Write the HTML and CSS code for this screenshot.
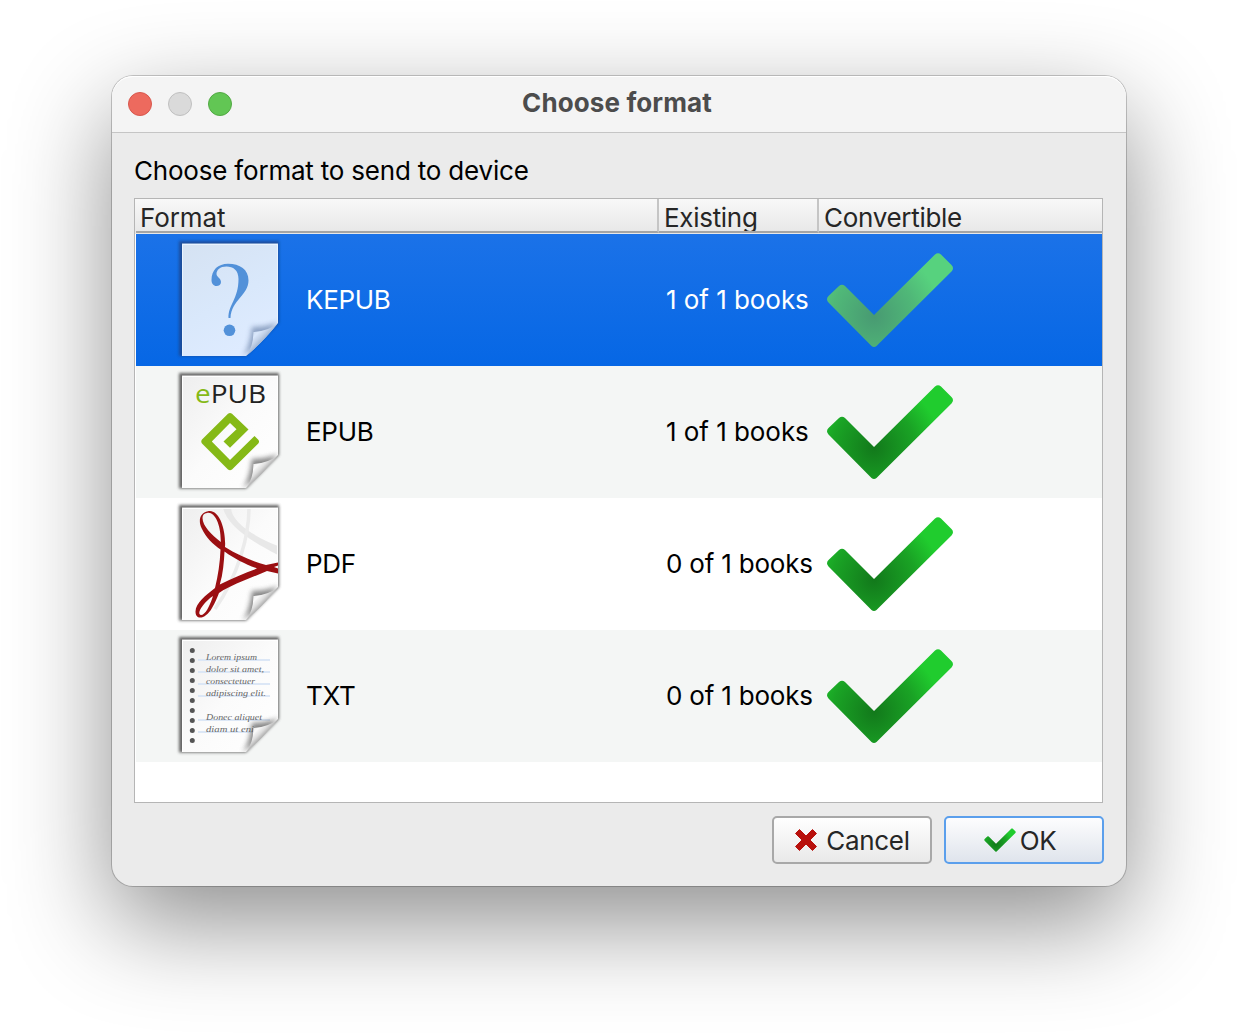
FILE: index.html
```html
<!DOCTYPE html>
<html lang="en">
<head>
<meta charset="utf-8">
<title>Choose format</title>
<link rel="stylesheet" href="styles.css">
</head>
<body>
<svg class="defs" aria-hidden="true">
  <defs>
    <radialGradient id="green" gradientUnits="userSpaceOnUse" cx="55" cy="82" r="76">
      <stop offset="0" stop-color="#12791b"/><stop offset=".55" stop-color="#1aa325"/><stop offset=".88" stop-color="#20cc2e"/>
    </radialGradient>
    <radialGradient id="green-selected" gradientUnits="userSpaceOnUse" cx="55" cy="82" r="76">
      <stop offset="0" stop-color="#489a72"/><stop offset=".55" stop-color="#50b878"/><stop offset=".88" stop-color="#57d27e"/>
    </radialGradient>
    <linearGradient id="paper" x1="0" y1="0" x2="1" y2="1">
      <stop offset="0" stop-color="#eeeeee"/><stop offset=".5" stop-color="#fbfbfb"/><stop offset="1" stop-color="#fff"/>
    </linearGradient>
    <linearGradient id="paper-selected" x1="0" y1="0" x2="0.5" y2="1">
      <stop offset="0" stop-color="#d5e2f2"/><stop offset=".6" stop-color="#d9e8fb"/><stop offset="1" stop-color="#deebff"/>
    </linearGradient>
    <linearGradient id="curl" gradientUnits="userSpaceOnUse" x1="82" y1="96" x2="93" y2="107">
      <stop offset="0" stop-color="#e6e6e6"/><stop offset=".4" stop-color="#fafafa"/><stop offset=".7" stop-color="#dedede"/><stop offset="1" stop-color="#a9a9a9"/>
    </linearGradient>
    <linearGradient id="curl-selected" gradientUnits="userSpaceOnUse" x1="82" y1="96" x2="93" y2="107">
      <stop offset="0" stop-color="#c9d8ee"/><stop offset=".4" stop-color="#d9e7fb"/><stop offset=".7" stop-color="#c3d2e8"/><stop offset="1" stop-color="#a0b4d0"/>
    </linearGradient>
    <filter id="soft" x="-20%" y="-20%" width="140%" height="140%"><feGaussianBlur stdDeviation="1.8"/></filter>
    <filter id="soft-fold" x="-50%" y="-50%" width="200%" height="200%"><feGaussianBlur stdDeviation="2.6"/></filter>
    <clipPath id="page-clip"><path d="M12 9.500H108V89Q92 109 76 122H12Z"/></clipPath>
    <path id="page" d="M12 9.500H108V89Q92 109 76 122H12Z"/>
    <path id="fold" d="M108 89Q92 109 76 122Q83 114 83.500 98Q99 97 108 89Z"/>
    <path id="fold-shade" d="M108 88Q97 93 82 93Q80 112 73 122L90 110Z"/>
    <path id="tick" d="M57.500 112Q55 114 52.500 112L9.500 68.500Q6.500 65.200 9.500 62L20 52Q23 49.500 26 52L55 81L116 20.500Q119 18 122 20.500L132.500 31Q135.500 34.200 132.500 37.500Z"/>
  </defs>
</svg>

<main class="window">
  <header class="titlebar">
    <div class="lights"><i class="light close"></i><i class="light idle"></i><i class="light grow"></i></div>
    <h1 class="title">Choose format</h1>
  </header>
  <section class="content">
    <p class="prompt">Choose format to send to device</p>
    <div class="table">
      <div class="row head">
        <div class="th"><span>Format</span></div>
        <div class="th"><span>Existing</span></div>
        <div class="th"><span>Convertible</span></div>
      </div>
      <div class="row item selected">
        <div class="format">
          <svg class="doc" viewBox="0 0 120 132">
            <path d="M9 7H109V89L76 122H9Z" fill="#1c3f80" opacity=".75" filter="url(#soft)"/>
            <use href="#page" fill="url(#paper-selected)"/>
            <path d="M12.500 122V10.500H107.500V89" fill="none" stroke="#e9f3ff"/>
            <path d="M58.500 84C58 71 68.500 65 68.500 45C68.500 36 63 32.500 56.500 32.500C50 32.500 46.500 36 46.500 40C46.500 43 51 44 51 48C51 50.500 49 52 46.500 52C43.500 52 41.500 49.500 41.500 46C41.500 36 48 29.800 58 29.800C70 29.800 78.500 35.500 78.500 46.500C78.500 61 61.500 66 60.500 84Z" fill="#5291d9"/>
            <circle cx="59.500" cy="96.300" r="5.800" fill="#5291d9"/>
            <g clip-path="url(#page-clip)"><use href="#fold-shade" fill="#58729b" opacity=".6" filter="url(#soft-fold)"/></g>
            <use href="#fold" fill="url(#curl-selected)"/>
          </svg><span class="name">KEPUB</span>
        </div>
        <div class="count"><span>1 of 1 books</span></div>
        <svg class="check" viewBox="0 0 140 132"><use href="#tick" fill="url(#green-selected)"/></svg>
      </div>
      <div class="row item alt">
        <div class="format">
          <svg class="doc" viewBox="0 0 120 132">
            <path d="M9 7H109V89L76 122.500H9Z" fill="#555" opacity=".9" filter="url(#soft)"/>
            <use href="#page" fill="url(#paper)"/>
            <path d="M12.500 122V10.500H107.500V89" fill="none" stroke="#fff"/>
            <text class="epub-word" x="25" y="37" textLength="71" lengthAdjust="spacingAndGlyphs"><tspan fill="#85b916">e</tspan>PUB</text>
            <path d="M53.500 75.500L60 81.800L78.500 63.600L62 47.800Q60 46.200 58 47.800L32 73.500Q30.500 75.500 32 77.500L58 103.500Q60 105 62 103.500L88.300 77.500Q89.800 75.500 88.300 73.700L84.500 70L60 94L41.800 75.500L60 57L66.500 63.200Z" fill="#85b916"/>
            <g clip-path="url(#page-clip)"><use href="#fold-shade" fill="#555" opacity=".7" filter="url(#soft-fold)"/></g>
            <use href="#fold" fill="url(#curl)"/>
          </svg><span class="name">EPUB</span>
        </div>
        <div class="count"><span>1 of 1 books</span></div>
        <svg class="check" viewBox="0 0 140 132"><use href="#tick" fill="url(#green)"/></svg>
      </div>
      <div class="row item">
        <div class="format">
          <svg class="doc" viewBox="0 0 120 132">
            <path d="M9 7H109V89L76 122.500H9Z" fill="#555" opacity=".9" filter="url(#soft)"/>
            <use href="#page" fill="url(#paper)"/>
            <g clip-path="url(#page-clip)">
              <path d="M53 10C57 27 80 43 108 57V48C85 39 62 25 61 10Z" fill="#e8e8e8"/>
              <path d="M79 10C79 38 68 78 45 111" fill="none" stroke="#ebebeb" stroke-width="3.500"/>
              <path fill-rule="evenodd" fill="#9b0f12" d="M38 13.200C30 15 28 22 31.500 30C36 40 43 46 50.500 51.500C50 65 48 78 45 90C36 97 25.500 105 25.500 113.500C25.500 123 36 121 42 110C45 105 47 100 49 95C63 86 81 80 97 73L108 75.500V70.500L104 69L108 67.500V64.500L96 67C81 63 68 57 55 49C56 37 52 18 43.500 14C41.500 13 40 13 38 13.200ZM37 15C44 13 51 25 50.800 44C42 37 32.500 28 32.500 20C32.500 17 34 15.500 37 15ZM54.500 53.500C65 61 75 66 87 70.500C75 75 63 79.500 49.800 86.500C53 76 54 64 54.500 53.500ZM43 98C39.500 109 35 117 31 117C26 116.500 32.500 105 43 98Z"/>
              <use href="#fold-shade" fill="#555" opacity=".7" filter="url(#soft-fold)"/>
            </g>
            <path d="M12.500 122V10.500H107.500V64" fill="none" stroke="#fff"/>
            <use href="#fold" fill="url(#curl)"/>
          </svg><span class="name">PDF</span>
        </div>
        <div class="count zero"><span>0 of 1 books</span></div>
        <svg class="check" viewBox="0 0 140 132"><use href="#tick" fill="url(#green)"/></svg>
      </div>
      <div class="row item alt">
        <div class="format">
          <svg class="doc" viewBox="0 0 120 132">
            <path d="M9 7H109V89L76 122.500H9Z" fill="#555" opacity=".9" filter="url(#soft)"/>
            <use href="#page" fill="url(#paper)"/>
            <path d="M12.500 122V10.500H107.500V89" fill="none" stroke="#fff"/>
            <path d="M28 30H100M28 42H100M28 54H100M28 66H100M28 90H100M28 102H84" stroke="#dce7f6" stroke-width="2"/>
            <path d="M22.300 20.500V111" stroke="#555" stroke-width="5" stroke-linecap="round" stroke-dasharray="0 10"/>
            <g class="script">
              <text x="36" y="29.500" textLength="51" lengthAdjust="spacingAndGlyphs">Lorem ipsum</text>
              <text x="36" y="41.500" textLength="58" lengthAdjust="spacingAndGlyphs">dolor sit amet,</text>
              <text x="36" y="53.500" textLength="49" lengthAdjust="spacingAndGlyphs">consectetuer</text>
              <text x="36" y="65.500" textLength="60" lengthAdjust="spacingAndGlyphs">adipiscing elit.</text>
              <text x="36" y="89.500" textLength="56" lengthAdjust="spacingAndGlyphs">Donec aliquet</text>
              <text x="36" y="101.500" textLength="48" lengthAdjust="spacingAndGlyphs">diam ut eni</text>
            </g>
            <g clip-path="url(#page-clip)"><use href="#fold-shade" fill="#555" opacity=".7" filter="url(#soft-fold)"/></g>
            <use href="#fold" fill="url(#curl)"/>
          </svg><span class="name">TXT</span>
        </div>
        <div class="count zero"><span>0 of 1 books</span></div>
        <svg class="check" viewBox="0 0 140 132"><use href="#tick" fill="url(#green)"/></svg>
      </div>
    </div>
    <footer class="actions">
      <button class="button cancel"><svg class="cross" viewBox="0 0 24 24"><path d="M5.500 1.500L12 8L18.500 1.500L22.500 5.500L16 12L22.500 18.500L18.500 22.500L12 16L5.500 22.500L1.500 18.500L8 12L1.500 5.500Z" fill="#b8100c" stroke="#b8100c" stroke-linejoin="round"/></svg><span>Cancel</span></button>
      <button class="button ok"><svg class="small-check" viewBox="7 18 128 96"><use href="#tick" fill="url(#green)"/></svg><span>OK</span></button>
    </footer>
  </section>
</main>
</body>
</html>
```
FILE: styles.css
```css
* { box-sizing: border-box; }
body {
  margin: 0;
  height: 1034px;
  padding: 76px 112px 0;
  overflow: hidden;
  background: #fff;
  font-family: Inter, "Liberation Sans", sans-serif;
  font-size: 26px;
  color: #000;
}
.defs { position: absolute; width: 0; height: 0; }
.window {
  width: 1014px;
  height: 810px;
  border-radius: 21px;
  background: #ebebeb;
  box-shadow: 0 0 0 1px rgba(0, 0, 0, .2), 0 36px 100px rgba(0, 0, 0, .45);
}
.titlebar {
  display: grid;
  grid-template-columns: 108px 1fr 128px;
  align-items: center;
  height: 57px;
  padding-left: 16px;
  border-bottom: 1px solid #c5c5c5;
  border-radius: 21px 21px 0 0;
  background: #f4f4f4;
  box-shadow: inset 0 1px #fff;
}
.lights { display: flex; gap: 16px; }
.light { width: 24px; height: 24px; border: 1px solid; border-radius: 50%; }
.close { background: #ed6a5e; border-color: #d8574d; }
.idle { background: #dadada; border-color: #c0c0c0; }
.grow { background: #62c654; border-color: #52a943; }
.title {
  margin: 0;
  font-size: 26px;
  line-height: 32px;
  font-weight: 700;
  letter-spacing: .12px;
  text-align: center;
  color: #4c4c4c;
  padding-bottom: 2px;
}
.content { padding: 22px 23px 0 22px; }
.prompt { margin: 0; height: 43px; line-height: 32px; white-space: nowrap; letter-spacing: -.2px; }
.name, .th span, .button span { letter-spacing: -.3px; }
.table { height: 605px; border: 1px solid #b5b5b5; background: #fff; }
.row { display: grid; grid-template-columns: 523px 160px 1fr; }
.head { height: 35px; padding-left: 1px; color: #262626; line-height: 38px; background: linear-gradient(#f8f8f8, #e8e8e8 92%); }
.th { height: 34px; padding-left: 4px; overflow: hidden; border-right: 2px solid #c5c5c5; border-bottom: 2px solid #a5a5a5; }
.th + .th { padding-left: 5px; }
.th:last-child { border-right: 0; }
.th:first-child span { letter-spacing: -.1px; }
.item { height: 132px; margin-left: 1px; }
.alt { background: #f4f6f5; }
.selected { color: #fff; background: linear-gradient(#1b72e8, #0667e5); }
.format { display: flex; align-items: center; padding-left: 34px; }
.doc { width: 120px; height: 132px; flex: none; }
.name { margin-left: 16px; padding-bottom: 2px; }
.count { padding-left: 7px; line-height: 132px; white-space: nowrap; letter-spacing: -.05px; }
.zero { letter-spacing: -.2px; }
.check { width: 140px; height: 132px; }
.epub-word { font: 26px "Open Sans", "Noto Sans", sans-serif; fill: #222; }
.script { font: italic 8px "Liberation Serif", serif; fill: #666; }
.actions { display: flex; justify-content: flex-end; gap: 12px; margin: 13px -1px 0 0; }
.button {
  display: flex;
  align-items: center;
  justify-content: center;
  width: 160px;
  height: 48px;
  padding: 0;
  border: 2px solid #a8a8a8;
  border-radius: 5px;
  background: linear-gradient(#fff, #e9e9e9);
  color: #262626;
  font: inherit;
}
.ok { padding-right: 8px; border-color: #5b9fec; background: linear-gradient(#fdfdfe, #dfe4ec); }
.cross { width: 24px; height: 24px; margin-right: 8px; }
.small-check { width: 32px; height: 24px; margin-right: 4px; }
```
